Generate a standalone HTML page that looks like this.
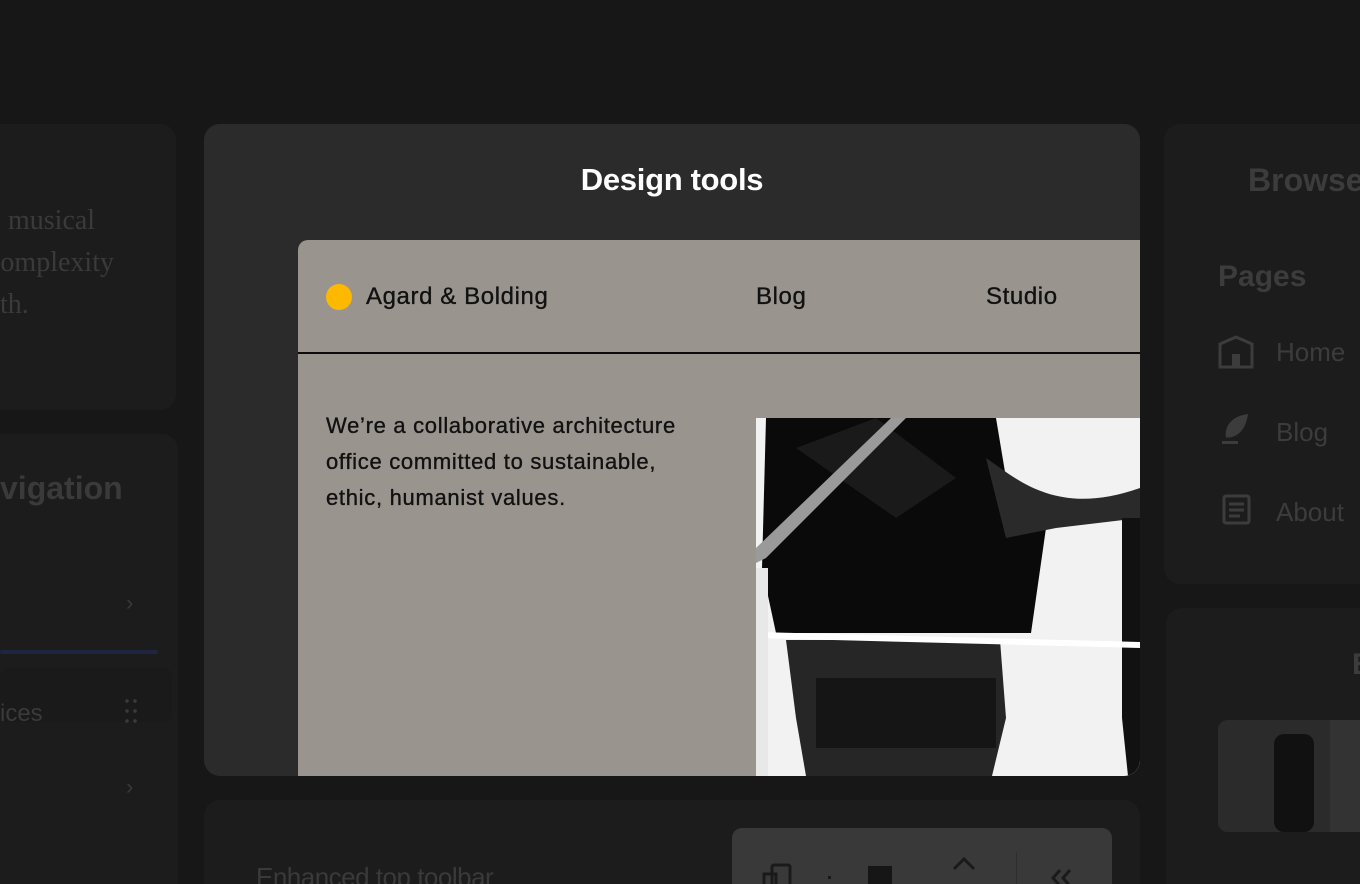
<!DOCTYPE html>
<html><head><meta charset="utf-8"><style>
*{margin:0;padding:0;box-sizing:border-box}
html,body{width:1360px;height:884px;overflow:hidden}
body{background:#171717;position:relative;font-family:"Liberation Sans",sans-serif}
.card{position:absolute;background:#1c1c1c;border-radius:16px}
.modal{position:absolute;left:204px;top:124px;width:936px;height:652px;background:#2b2b2b;border-radius:16px;overflow:hidden}
.panel{position:absolute;left:94px;top:116px;width:860px;height:560px;background:#9a948f;border-radius:10px 0 0 0;font-family:"Liberation Sans",sans-serif;color:#111;-webkit-text-stroke:0.35px #111}
</style></head><body>
<div class="card" style="left:-20px;top:124px;width:196px;height:286px"></div>
<div style="position:absolute;left:0;top:200px;font-family:'Liberation Serif',serif;font-size:28px;line-height:42px;color:#3a3a3a;white-space:nowrap">
<div style="margin-left:8px">musical</div><div style="margin-left:-12px">complexity</div><div style="margin-left:-14px">gth.</div></div>
<div class="card" style="left:-20px;top:434px;width:198px;height:470px"></div>
<div style="position:absolute;left:0;top:470px;font-size:32px;font-weight:bold;color:#3a3a3a">vigation</div>
<div style="position:absolute;left:126px;top:590px;font-size:22px;color:#3a3a3a">›</div>
<div style="position:absolute;left:0;top:650px;width:158px;height:4px;background:#1f2440;border-radius:2px"></div>
<div style="position:absolute;left:0;top:668px;width:172px;height:54px;background:#1a1a1a;border-radius:8px"></div>
<div style="position:absolute;left:0;top:700px;font-size:24px;color:#3a3a3a">ices</div>
<div style="position:absolute;left:123px;top:696px;width:16px;height:30px;background-image:radial-gradient(circle,#3a3a3a 1.6px,transparent 2px);background-size:8px 10px"></div>
<div style="position:absolute;left:126px;top:774px;font-size:22px;color:#3a3a3a">›</div>

<div class="card" style="left:1164px;top:124px;width:220px;height:460px"></div>
<div style="position:absolute;left:1248px;top:162px;font-size:32px;font-weight:bold;color:#3c3c3c">Browse</div>
<div style="position:absolute;left:1218px;top:260px;font-size:30px;font-weight:bold;color:#3c3c3c">Pages</div>
<svg style="position:absolute;left:1218px;top:334px" width="36" height="36" viewBox="0 0 36 36" fill="none" stroke="#3c3c3c" stroke-width="3"><path d="M2 10 L18 3 L34 10 V33 H2 Z"/><rect x="14" y="20" width="8" height="13" fill="#3c3c3c" stroke="none"/></svg>
<div style="position:absolute;left:1276px;top:337px;font-size:26px;color:#3c3c3c">Home</div>
<svg style="position:absolute;left:1222px;top:410px" width="30" height="36" viewBox="0 0 30 36" fill="#3c3c3c"><path d="M4 28 C2 16 10 6 26 4 C24 18 18 26 6 28 L14 16 L8 26 Z"/><rect x="0" y="31" width="16" height="3"/></svg>
<div style="position:absolute;left:1276px;top:417px;font-size:26px;color:#3c3c3c">Blog</div>
<svg style="position:absolute;left:1222px;top:494px" width="30" height="32" viewBox="0 0 30 32" fill="none" stroke="#3c3c3c" stroke-width="3"><rect x="2" y="2" width="25" height="27" rx="2"/><path d="M7 10H22M7 16H22M7 22H18"/></svg>
<div style="position:absolute;left:1276px;top:497px;font-size:26px;color:#3c3c3c">About</div>

<div class="card" style="left:1166px;top:608px;width:220px;height:300px"></div>
<div style="position:absolute;left:1352px;top:648px;font-size:30px;font-weight:bold;color:#3c3c3c">B</div>
<div style="position:absolute;left:1218px;top:720px;width:160px;height:112px;border-radius:10px;overflow:hidden;background:#333">
<div style="position:absolute;left:0;top:0;width:112px;height:112px;background:#2b2b2b"></div>
<div style="position:absolute;left:56px;top:14px;width:40px;height:98px;background:#111;border-radius:10px"></div>
</div>

<div class="card" style="left:204px;top:800px;width:936px;height:120px"></div>
<div style="position:absolute;left:256px;top:862px;font-size:26px;color:#3a3a3a;letter-spacing:-0.5px">Enhanced top toolbar</div>
<div style="position:absolute;left:732px;top:828px;width:380px;height:80px;background:#393939;border-radius:10px">
<svg style="position:absolute;left:30px;top:34px" width="34" height="30" fill="none" stroke="#1a1a1a" stroke-width="3"><rect x="10" y="3" width="18" height="24" rx="2"/><rect x="2" y="12" width="12" height="16"/></svg>
<div style="position:absolute;left:96px;top:48px;width:3px;height:3px;background:#1a1a1a"></div>
<div style="position:absolute;left:136px;top:38px;width:24px;height:30px;background:#161616"></div>
<svg style="position:absolute;left:220px;top:28px" width="24" height="16" fill="none" stroke="#1a1a1a" stroke-width="3"><path d="M2 13 L12 3 L22 13"/></svg>
<div style="position:absolute;left:284px;top:24px;width:1px;height:56px;background:#2e2e2e"></div>
<svg style="position:absolute;left:316px;top:38px" width="30" height="24" fill="none" stroke="#1a1a1a" stroke-width="3"><path d="M12 4 L5 12 L12 20 M22 4 L15 12 L22 20"/></svg>
</div>

<div class="modal">
<div style="position:absolute;left:0;width:936px;top:38px;text-align:center;font-size:31px;font-weight:bold;color:#fff;font-family:'Liberation Sans',sans-serif;letter-spacing:-0.3px">Design tools</div>
<div class="panel">
<div style="position:absolute;left:28px;top:44px;width:26px;height:26px;border-radius:50%;background:#ffb800;-webkit-text-stroke:0"></div>
<div style="position:absolute;left:68px;top:43px;font-size:24px;letter-spacing:0.6px">Agard &amp; Bolding</div>
<div style="position:absolute;left:458px;top:43px;font-size:24px;letter-spacing:0.6px">Blog</div>
<div style="position:absolute;left:688px;top:43px;font-size:24px;letter-spacing:0.6px">Studio</div>
<div style="position:absolute;left:0;top:112px;width:860px;height:2px;background:#0c0c0c"></div>
<div style="position:absolute;left:28px;top:168px;font-size:22px;letter-spacing:0.7px;line-height:36px;width:372px">We’re a collaborative architecture office committed to sustainable, ethic, humanist values.</div>
<svg style="position:absolute;left:458px;top:178px" width="384" height="358" viewBox="0 0 384 358">
<rect width="384" height="358" fill="#f2f2f2"/>
<path d="M10 0 H240 L250 60 L290 110 L275 215 H20 L6 150 Z" fill="#0a0a0a"/>
<path d="M40 30 L120 0 L200 60 L140 100 Z" fill="#1a1a1a"/>
<path d="M230 40 C260 60 300 100 384 70 V100 L300 110 L250 120 Z" fill="#2a2a2a"/>
<path d="M30 222 H244 L250 300 L236 358 H50 L40 300 Z" fill="#262626"/>
<path d="M60 260 H240 V330 H60 Z" fill="#151515"/>
<path d="M366 100 H384 V358 H372 L366 300 Z" fill="#111"/>
<path d="M0 145 L10 140 L150 0 L135 0 L0 130 Z" fill="#9a9a9a"/>
<path d="M0 214 L384 224 L384 230 L0 220 Z" fill="#fff"/>
<path d="M0 150 H12 V358 H0 Z" fill="#e8e8e8"/>
</svg>
</div>
</div>
</body></html>
